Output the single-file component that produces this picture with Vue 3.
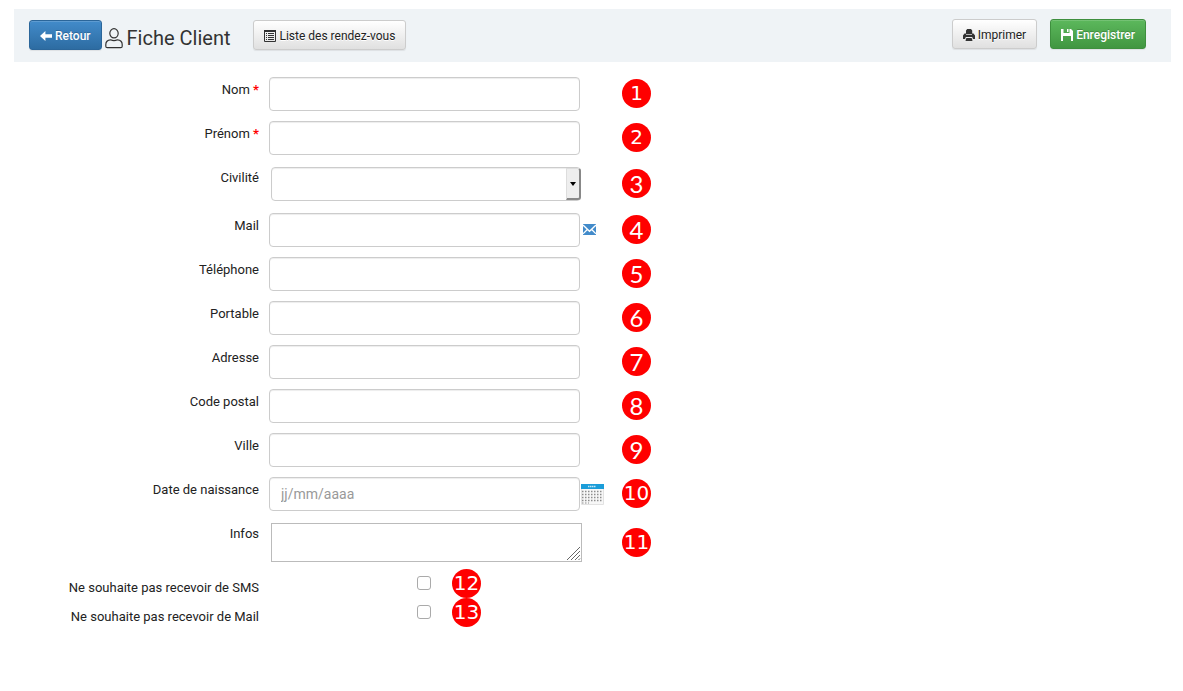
<script setup>
import { reactive } from 'vue'

const rows = [
  { id: 'nom', label: 'Nom', required: true, type: 'text', badge: 1 },
  { id: 'prenom', label: 'Prénom', required: true, type: 'text', badge: 2 },
  { id: 'civilite', label: 'Civilité', type: 'select', badge: 3 },
  { id: 'mail', label: 'Mail', type: 'email', badge: 4 },
  { id: 'telephone', label: 'Téléphone', type: 'tel', badge: 5 },
  { id: 'portable', label: 'Portable', type: 'tel', badge: 6 },
  { id: 'adresse', label: 'Adresse', type: 'text', badge: 7 },
  { id: 'cp', label: 'Code postal', type: 'text', badge: 8 },
  { id: 'ville', label: 'Ville', type: 'text', badge: 9 },
  { id: 'naissance', label: 'Date de naissance', type: 'text', placeholder: 'jj/mm/aaaa', badge: 10 },
  { id: 'infos', label: 'Infos', type: 'textarea', badge: 11 },
]
const checks = [
  { id: 'nosms', label: 'Ne souhaite pas recevoir de SMS', badge: 12 },
  { id: 'nomail', label: 'Ne souhaite pas recevoir de Mail', badge: 13 },
]
const form = reactive({
  nom: '', prenom: '', civilite: '', mail: '', telephone: '', portable: '',
  adresse: '', cp: '', ville: '', naissance: '', infos: '', nosms: false, nomail: false,
})
const tall = (n) => n > 2 && n < 10
</script>

<template>
  <main class="page">
    <header class="bar">
      <button type="button" class="btn primary">
        <svg width="12" height="12" viewBox="0 0 12 12"><path d="M0 6 5.4 1v3.3H12v3.4H5.4V11z" fill="#fff" /></svg>
        Retour
      </button>
      <h1>
        <svg width="18" height="21" viewBox="0 0 18 21" fill="none" stroke="#333" stroke-width="1.2">
          <ellipse cx="9" cy="5.3" rx="4.2" ry="4.6" />
          <path d="M5.6 11.8C2.5 12 .8 13.8 .8 16.5V18.2Q.8 19.7 2.3 19.7H15.7Q17.2 19.7 17.2 18.2V16.5C17.2 13.8 15.5 12 12.4 11.8Q9 13.6 5.6 11.8Z" />
        </svg>
        Fiche Client
      </h1>
      <button type="button" class="btn plain list">
        <svg width="12" height="12" viewBox="0 0 12 12">
          <path d="M.5.5h11v11H.5z" fill="none" stroke="#333" />
          <path d="M0 0h12v2H0z" fill="#333" />
          <path d="M2 3.5h1M4 3.5h6M2 5.5h1M4 5.5h6M2 7.5h1M4 7.5h6M2 9.5h1M4 9.5h6" stroke="#333" />
        </svg>
        Liste des rendez-vous
      </button>
      <div class="right">
        <button type="button" class="btn plain">
          <svg width="12" height="12" viewBox="0 0 12 12" fill="#333">
            <path d="M3 4.5V1.5L4.2 0H8L9.2 1.5V4.5H10.5L12 6.500V10H10L9.2 8H2.8L2 10H0V6.5L1.5 4.5Z" />
            <path d="M3.3 9h5.4l.8 3h-7z" />
            <path d="M3 5.5h6" stroke="#eee" stroke-width=".7" />
          </svg>
          Imprimer
        </button>
        <button type="submit" form="client" class="btn success">
          <svg width="12" height="12" viewBox="0 0 12 12"><path d="M0 0H2.5V4H8.5V0H10L12 2V12H10V7H2V12H0ZM6 0H7.5V3H6Z" fill="#fff" /></svg>
          Enregistrer
        </button>
      </div>
    </header>

    <form id="client" @submit.prevent>
      <div v-for="r in rows" :key="r.id" class="row" :class="r.type">
        <label :for="r.id">{{ r.label }} <span v-if="r.required" class="req">*</span></label>
        <div class="field">
          <div v-if="r.type === 'select'" class="select-wrap">
            <select :id="r.id" v-model="form[r.id]"><option value=""></option></select>
            <span class="arrow" aria-hidden="true"></span>
          </div>
          <div v-else-if="r.type === 'textarea'" class="area-wrap">
            <textarea :id="r.id" v-model="form[r.id]"></textarea>
            <svg class="grip" width="14" height="14" viewBox="0 0 14 14" stroke="#666" aria-hidden="true">
              <path d="M0 13 13 0M4 13 13 4M8 13 13 8M11.5 13 13 11.5" />
            </svg>
          </div>
          <input v-else :id="r.id" v-model="form[r.id]" :type="r.type" :placeholder="r.placeholder" />
          <svg v-if="r.id === 'mail'" class="mail" width="13" height="11" viewBox="0 0 13 11">
            <path d="M0 0H13V11H0Z" fill="#428bca" />
            <path d="M0 1 6.5 7.3 13 1M0 9.8 4.3 5.5M13 9.8 8.7 5.5" fill="none" stroke="#fff" stroke-width="1.3" />
          </svg>
          <svg v-if="r.id === 'naissance'" class="cal" width="24" height="21" viewBox="0 0 24 21">
            <path d="M1.5.5h22v20h-22z" fill="#f7f7f7" stroke="#e2e2e2" />
            <path d="M1 0h23v5H1z" fill="#1b9dd9" />
            <path d="M8 2.5h8" stroke="#c5e8f8" stroke-width="1.5" stroke-dasharray="1.5 .5" />
            <path d="M2 7.5h20M2 10.5h20M2 13.5h20M2 16.5h20" stroke="#8d8d8d" stroke-width="1.5" stroke-dasharray="1.5 1.5" />
            <path d="M2 19h7" stroke="#8d8d8d" stroke-dasharray="1.5 1.5" />
          </svg>
        </div>
        <span class="badge" :class="{ tall: tall(r.badge) }">{{ r.badge }}</span>
      </div>
      <div class="checks">
        <div v-for="c in checks" :key="c.id" class="check-row">
          <label :for="c.id">{{ c.label }}</label>
          <div class="check-field"><input :id="c.id" v-model="form[c.id]" type="checkbox" /></div>
          <span class="badge">{{ c.badge }}</span>
        </div>
      </div>
    </form>
  </main>
</template>

<style>
body { margin: 0; background: #fff; }
</style>

<style scoped>
* { box-sizing: border-box; }
.page { padding: 9px 12px 40px 14px; font-family: Roboto, "Liberation Sans", sans-serif; color: #333; }
.bar { display: flex; align-items: center; min-height: 53px; padding: 0 25px 1px 15px; background: #eff3f6; }
h1 { display: flex; align-items: center; gap: 4px; margin: 6px 0 0 3px; font-size: 20px; font-weight: 400; line-height: 24px; white-space: nowrap; }
.btn { display: flex; align-items: center; gap: 3px; height: 30px; padding: 1px 10px 0; border: 1px solid; border-radius: 3px; font-family: inherit; font-size: 12px; font-weight: 500; line-height: 18px; white-space: nowrap; box-shadow: inset 0 1px 0 rgba(255, 255, 255, .15), 0 1px 1px rgba(0, 0, 0, .075); }
.primary { color: #fff; border-color: #2b669a; background: linear-gradient(#428bca, #2d6ca2); text-shadow: 0 -1px 0 rgba(0, 0, 0, .2); }
.plain { font-weight: 400; color: #222; border-color: #ccc; background: linear-gradient(#fff, #e0e0e0); text-shadow: 0 1px 0 #fff; }
.success { color: #fff; border-color: #3e8f3e; background: linear-gradient(#5cb85c, #419641); text-shadow: 0 -1px 0 rgba(0, 0, 0, .2); }
.list { margin-left: 23px; }
.right { display: flex; gap: 13px; margin: 0 0 2px auto; }

form { padding-top: 15px; }
.row { display: flex; align-items: flex-start; margin-bottom: 10px; }
label { flex: 0 0 245px; padding-top: 3px; text-align: right; font-size: 13px; font-weight: 400; line-height: 19px; color: #222; }
.req { color: #f00; font-weight: 700; }
.field { display: flex; align-items: center; flex: 0 1 363px; padding-left: 10px; }
.field > input { width: 311px; height: 34px; padding: 6px 11px; border: 1px solid #ccc; border-radius: 4px; background: #fff; font-family: inherit; font-size: 14px; color: #555; box-shadow: inset 0 1px 1px rgba(0, 0, 0, .075); }
.field > input::placeholder { color: #999; }
.select, .textarea { padding-top: 2px; }
.select { margin-bottom: 12px; }
.select label, .textarea label { margin-top: -2px; }
.select .field, .textarea .field { padding-left: 12px; }
.select-wrap { position: relative; width: 310px; }
.select-wrap select { display: block; width: 100%; height: 34px; appearance: none; border: 1px solid #ccc; border-radius: 4px; background: #fff; font: inherit; box-shadow: inset 0 1px 1px rgba(0, 0, 0, .075); }
.arrow { position: absolute; top: 1px; right: 0; width: 15px; height: 32px; border: 1px solid #ddd; border-right: 2px solid #888; border-bottom: 2px solid #888; border-radius: 0 3px 3px 0; background: #eee; pointer-events: none; }
.arrow::after { content: ""; position: absolute; top: 13px; left: 3px; border: 3px solid transparent; border-top: 4px solid #000; border-bottom: 0; }
.area-wrap { position: relative; width: 311px; }
.area-wrap textarea { display: block; width: 100%; height: 39px; resize: none; border: 1px solid #bbb; border-radius: 0; background: #fff; font: inherit; }
.grip { position: absolute; right: 1px; bottom: 1px; pointer-events: none; }
.mail { margin: 0 0 2px 3px; }
.badge { flex: none; display: flex; align-items: center; justify-content: center; width: 29px; height: 29px; border-radius: 50%; background: #f00; color: #fff; font-family: "DejaVu Sans", sans-serif; font-size: 20px; line-height: 29px; }
.row .badge { margin-top: 2px; }
.textarea .badge { margin-top: 5px; }
.badge.tall { font-family: Lato, sans-serif; font-size: 24px; }
.checks { margin-top: -3px; }
.check-row { display: flex; align-items: flex-start; min-height: 28px; }
.check-row label { padding-top: 9px; }
.check-field { flex: 0 1 193px; display: flex; padding-left: 158px; }
.check-field input { width: 14px; height: 14px; margin: 7px 0 0; appearance: none; border: 1px solid #aaa; border-radius: 3px; background: #fff; }
</style>
